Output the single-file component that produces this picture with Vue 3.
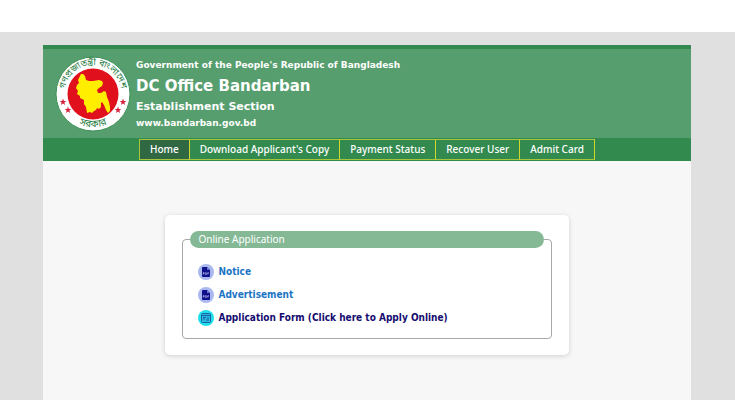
<template>
  <div class="top-bar"></div>
  <div class="page">
    <header class="header">
      <svg class="seal" viewBox="0 0 76 76" role="img" aria-label="Government seal">
        <defs>
          <path id="seal-top" d="M10.5 45 A28.5 28.5 0 1 1 65.5 45" />
          <path id="seal-bottom" d="M9 54 A33 33 0 0 0 67 54" />
        </defs>
        <circle cx="38" cy="38" r="37" fill="#fff" stroke="#3f9159" stroke-width="1" />
        <circle cx="38" cy="38" r="25.5" fill="#e0101c" />
        <path
          fill="#ffee00"
          d="M26 18l2 0 2 2 1 4 3 1 4 0 6-1 3 1 1 2-1 3-3 2-2 2 1 3 3 0 3-2 2 1 1 5 2 5 1 5 0 4-2 2-2-3-2-5-2-3-1 1 0 4-2 2-2-1-1 2-2 1-2 2-2-1-3 1-1-6-2-3 0-4-4-2 0-2-3-2 1-3-2-3 1-3 2-2-1-3z"
        />
        <text class="seal-text" text-anchor="middle">
          <textPath href="#seal-top" startOffset="50%">গণপ্রজাতন্ত্রী বাংলাদেশ</textPath>
        </text>
        <text class="seal-text bottom" text-anchor="middle">
          <textPath href="#seal-bottom" startOffset="50%">সরকার</textPath>
        </text>
        <path
          v-for="(star, index) in stars"
          :key="index"
          :transform="`translate(${star.x} ${star.y})`"
          fill="#d4213d"
          d="M0-3.4l.9 2.3 2.4.1-1.9 1.5.7 2.4L0 1.5l-2.1 1.4.7-2.4-1.9-1.5 2.4-.1z"
        />
      </svg>
      <div class="titles">
        <p class="line">Government of the People's Republic of Bangladesh</p>
        <h1>DC Office Bandarban</h1>
        <h2>Establishment Section</h2>
        <p class="line">www.bandarban.gov.bd</p>
      </div>
    </header>

    <nav class="nav">
      <a
        v-for="item in menu"
        :key="item"
        href="#"
        :class="{ active: item === current }"
        @click.prevent="current = item"
      >{{ item }}</a>
    </nav>

    <main class="content">
      <section class="card">
        <fieldset>
          <legend>Online Application</legend>
          <ul>
            <li v-for="link in links" :key="link.text">
              <a href="#" :class="link.type">
                <svg v-if="link.type === 'pdf'" class="icon" viewBox="0 0 16 16" aria-hidden="true">
                  <circle cx="8" cy="8" r="8" fill="#a9b8ee" />
                  <path d="M4 4q0-1 1-1h4l3 3v6q0 1-1 1H5q-1 0-1-1z" fill="#10108c" />
                  <path d="M9 3v3h3z" fill="#6874c9" />
                  <path
                    d="M5.2 10.6v-2h1q.6.5 0 1h-1M7.4 8.6v2q1.6 0 1.6-1t-1.6-1M10.8 8.6h-1v2m0-1h.8"
                    fill="none"
                    stroke="#c5cdf8"
                    stroke-width=".6"
                  />
                </svg>
                <svg v-else class="icon" viewBox="0 0 16 16" aria-hidden="true">
                  <circle cx="8" cy="8" r="8" fill="#1fe0ea" />
                  <rect x="3.5" y="3.5" width="9" height="9" rx="1" fill="#2bb7df" stroke="#1763a5" />
                  <path d="M4 5.5h8M5 7.5h3M5 9h2M9 8h2M8 10h3" fill="none" stroke="#1763a5" />
                </svg>
                {{ link.text }}
              </a>
            </li>
          </ul>
        </fieldset>
      </section>
    </main>
  </div>
</template>

<script setup>
import { ref } from 'vue'

const menu = [
  'Home',
  "Download Applicant's Copy",
  'Payment Status',
  'Recover User',
  'Admit Card',
]
const current = ref('Home')

const links = [
  { text: 'Notice', type: 'pdf' },
  { text: 'Advertisement', type: 'pdf' },
  { text: 'Application Form (Click here to Apply Online)', type: 'form' },
]

// stars on both sides of the lower word
const stars = [
  { x: 8, y: 46 },
  { x: 13, y: 54 },
  { x: 68, y: 46 },
  { x: 63, y: 54 },
]
</script>

<style>
body {
  margin: 0;
  background: #e0e0e0;
}
</style>

<style scoped>
.top-bar {
  height: 32px;
  background: #fff;
}

.page {
  display: flex;
  flex-direction: column;
  box-sizing: border-box;
  min-height: calc(100vh - 45px);
  margin: 13px 44px 0 43px;
  background: #f7f7f7;
  font-family: 'Noto Sans', sans-serif;
  font-size: 10px;
}

.header {
  display: flex;
  align-items: center;
  gap: 5px;
  padding: 7px 12px 6px;
  border-top: 4px solid #338a4f;
  background: #569e6d;
  color: #fff;
  font-family: 'DejaVu Sans', sans-serif;
}

.seal {
  flex: none;
  width: 76px;
  height: 76px;
}

.seal-text {
  fill: #1d7a3e;
  font-family: 'Noto Sans Bengali', 'Noto Sans', sans-serif;
  font-size: 9px;
}

.seal-text.bottom {
  font-size: 10px;
}

.titles p,
.titles h1,
.titles h2 {
  margin: 0;
  font-weight: bold;
}

.titles .line {
  font-size: 9px;
  line-height: 16px;
}

.titles h1 {
  font-size: 15px;
  line-height: 26px;
}

.titles h2 {
  font-size: 11px;
  line-height: 16px;
}

.nav {
  display: flex;
  padding: 1px 96px;
  background: #338a4f;
}

.nav a {
  padding: 0 10px;
  border: 1px solid #a8c53a;
  border-right-color: #d0d62c;
  border-left-width: 0;
  color: #fff;
  font-weight: 500;
  line-height: 19px;
  text-decoration: none;
  white-space: nowrap;
}

.nav a:first-child {
  border-left-width: 1px;
}

.nav a.active {
  background: #306844;
}

.content {
  padding-top: 54px;
}

.card {
  box-sizing: border-box;
  width: 62.2%;
  margin: 0 auto;
  padding: 16px 17px;
  border-radius: 5px;
  background: #fff;
  box-shadow: 0 1px 5px rgba(0, 0, 0, 0.16);
}

fieldset {
  min-width: 0;
  margin: 0;
  padding: 12px 7px 9px;
  border: 1px solid #a8a8a8;
  border-radius: 4px;
}

legend {
  box-sizing: border-box;
  width: 100%;
  padding: 0 8px;
  border-radius: 9px;
  background: #85b996;
  color: #fff;
  line-height: 17px;
}

ul {
  margin: 0;
  padding: 0 8px;
  list-style: none;
}

li a {
  display: flex;
  align-items: center;
  gap: 4px;
  color: #1b75c4;
  font-family: 'DejaVu Sans Condensed', 'DejaVu Sans', sans-serif;
  font-weight: bold;
  line-height: 23px;
  text-decoration: none;
}

li a.form {
  color: #150c70;
}

.icon {
  flex: none;
  width: 16px;
  height: 16px;
}
</style>
